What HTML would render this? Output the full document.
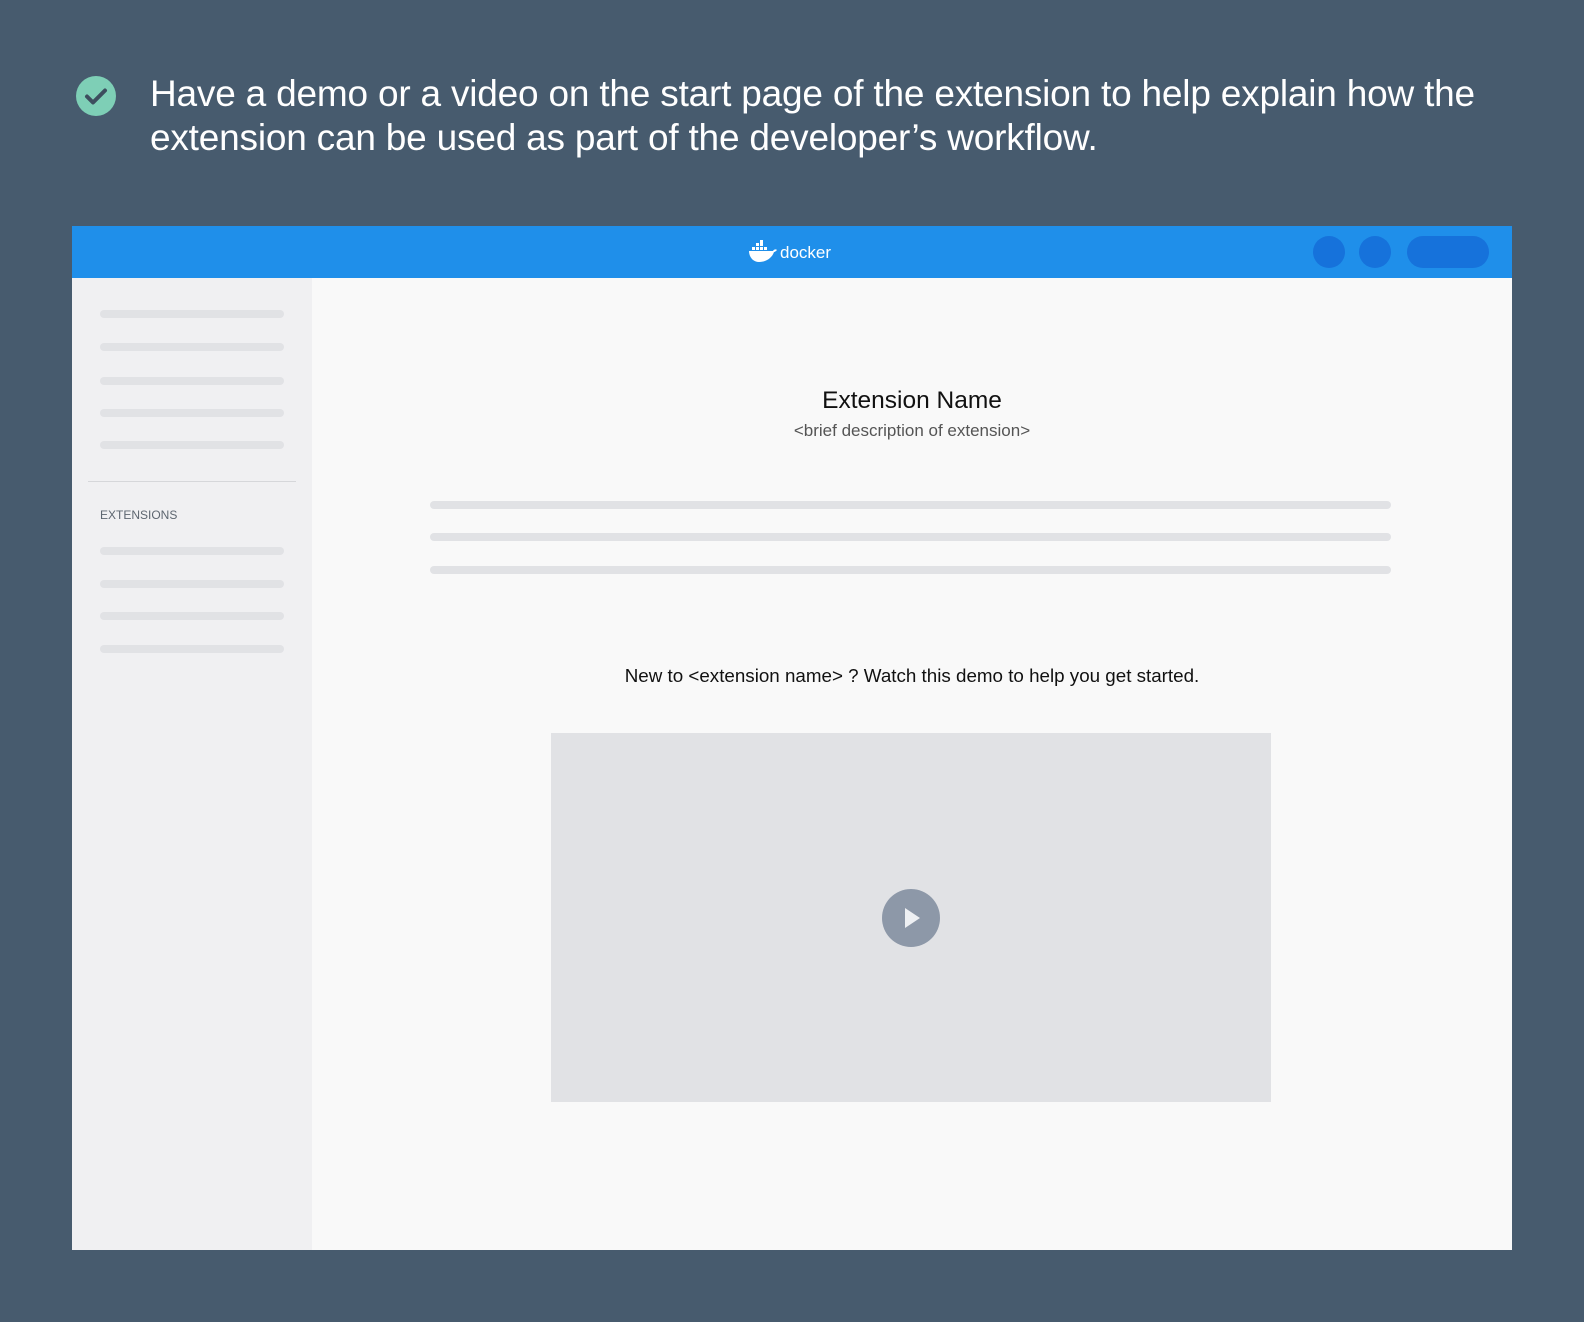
<!DOCTYPE html>
<html><head><meta charset="utf-8"><style>
*{margin:0;padding:0;box-sizing:border-box}
body{width:1584px;height:1322px;background:#475b6e;position:relative;overflow:hidden;font-family:"Liberation Sans",sans-serif}
.abs{position:absolute}
.h{left:150px;top:72px;color:#fff;font-size:37px;line-height:44px;width:1420px;letter-spacing:-0.2px}
.sl{position:absolute;left:100px;width:184px;height:8px;border-radius:4px;background:#e1e2e5}
.cl{position:absolute;left:430px;width:961px;height:8px;border-radius:4px;background:#e1e2e5}
</style></head><body>
<svg class="abs" style="left:76px;top:76px" width="40" height="40" viewBox="0 0 40 40"><circle cx="20" cy="20" r="20" fill="#7ecfb6"/><path d="M11 20.5l6 6 12-12" stroke="#3d4e5e" stroke-width="4" fill="none" stroke-linecap="round" stroke-linejoin="round"/></svg>
<div class="abs h">Have a demo or a video on the start page of the extension to help explain how the extension can be used as part of the developer’s workflow.</div>
<div class="abs" style="left:72px;top:226px;width:1440px;height:52px;background:#1f8fea"></div>
<svg class="abs" style="left:748px;top:240px" width="30" height="24" viewBox="0 0 30 24"><g fill="#fff"><rect x="8" y="3" width="3" height="3"/><rect x="12" y="3" width="3" height="3"/><rect x="12" y="0" width="3" height="3"/><rect x="4" y="7" width="3" height="3"/><rect x="8" y="7" width="3" height="3"/><rect x="12" y="7" width="3" height="3"/><rect x="16" y="7" width="3" height="3"/><path d="M1 11h24c1-2 3-2 4-1-1 1-2 2-3 2-2 6-8 10-15 10C5 22 1 17 1 11z"/></g></svg>
<div class="abs" style="left:780px;top:243px;color:#fff;font-size:17px">docker</div>
<div class="abs" style="left:1313px;top:236px;width:32px;height:32px;border-radius:50%;background:#1672db"></div>
<div class="abs" style="left:1359px;top:236px;width:32px;height:32px;border-radius:50%;background:#1672db"></div>
<div class="abs" style="left:1407px;top:236px;width:82px;height:32px;border-radius:16px;background:#1672db"></div>
<div class="abs" style="left:72px;top:278px;width:240px;height:972px;background:#f0f0f2"></div>
<div class="abs" style="left:312px;top:278px;width:1200px;height:972px;background:#f9f9f9"></div>
<div class="sl" style="top:310px"></div><div class="sl" style="top:343px"></div><div class="sl" style="top:377px"></div><div class="sl" style="top:409px"></div><div class="sl" style="top:441px"></div>
<div class="abs" style="left:88px;top:481px;width:208px;height:1px;background:#d6d7da"></div>
<div class="abs" style="left:100px;top:508px;font-size:12px;color:#5d6670">EXTENSIONS</div>
<div class="sl" style="top:547px"></div><div class="sl" style="top:580px"></div><div class="sl" style="top:612px"></div><div class="sl" style="top:645px"></div>
<div class="abs" style="left:312px;top:387px;width:1200px;text-align:center;font-size:24.5px;color:#111">Extension Name</div>
<div class="abs" style="left:312px;top:421px;width:1200px;text-align:center;font-size:17px;color:#555">&lt;brief description of extension&gt;</div>
<div class="cl" style="top:501px"></div><div class="cl" style="top:533px"></div><div class="cl" style="top:566px"></div>
<div class="abs" style="left:312px;top:665px;width:1200px;text-align:center;font-size:18.8px;color:#111">New to &lt;extension name&gt; ? Watch this demo to help you get started.</div>
<div class="abs" style="left:551px;top:733px;width:720px;height:369px;background:#e1e2e5"></div>
<svg class="abs" style="left:882px;top:889px" width="58" height="58" viewBox="0 0 58 58"><circle cx="29" cy="29" r="29" fill="#8d98a8"/><path d="M23 19v20l15-10z" fill="#eef0f3"/></svg>
</body></html>
